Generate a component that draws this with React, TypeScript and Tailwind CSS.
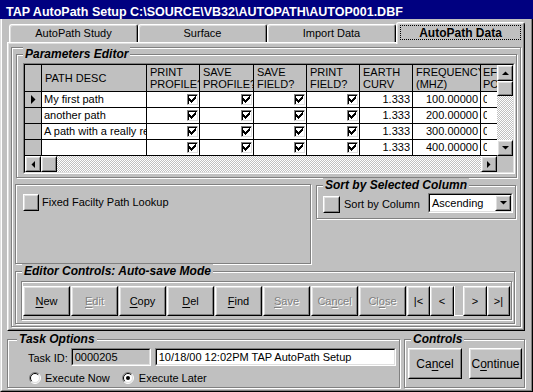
import React from "react";

type P = { className?: string; inner?: string; children?: React.ReactNode };

const RAISED_OUT = "border border-t-white border-l-white border-r-black border-b-black";
const RAISED_IN = "border border-t-[#dfdfdf] border-l-[#dfdfdf] border-r-[#808080] border-b-[#808080]";
const SUNK_OUT = "border border-t-[#808080] border-l-[#808080] border-r-white border-b-white";
const SUNK_IN = "border border-t-black border-l-black border-r-[#dfdfdf] border-b-[#dfdfdf]";
const ETCHED = "border border-[#808080] shadow-[inset_1px_1px_0_#ffffff,1px_1px_0_#ffffff]";
const DITHER =
  "bg-[repeating-conic-gradient(#ffffff_0%_25%,#c0c0c0_0%_50%)] [background-size:2px_2px]";

function Raised({ className = "", inner = "", children }: P) {
  return (
    <div className={`${RAISED_OUT} bg-[#c0c0c0] shrink-0 ${className}`}>
      <div className={`${RAISED_IN} w-full h-full flex items-center justify-center ${inner}`}>{children}</div>
    </div>
  );
}

function Sunken({ className = "", inner = "", children }: P) {
  return (
    <div className={`${SUNK_OUT} shrink-0 ${className}`}>
      <div className={`${SUNK_IN} w-full h-full ${inner}`}>{children}</div>
    </div>
  );
}

function Group({ label, className = "", labelPos = "left-[6px]", children }: P & { label?: string; labelPos?: string }) {
  return (
    <div className={`relative shrink-0 ${ETCHED} ${className}`}>
      {label && (
        <span
          className={`absolute ${labelPos} top-[-8px] bg-[#c0c0c0] px-[2px] text-[12px] leading-[14px] font-bold italic whitespace-nowrap`}
        >
          {label}
        </span>
      )}
      {children}
    </div>
  );
}

function Arrow({ dir }: { dir: "up" | "down" | "left" | "right" }) {
  const pts =
    dir === "up"
      ? "0,4 7,4 3.5,0.5"
      : dir === "down"
      ? "0,0 7,0 3.5,3.5"
      : dir === "left"
      ? "4,0 4,7 0.5,3.5"
      : "0,0 0,7 3.5,3.5";
  const w = dir === "up" || dir === "down" ? 7 : 4;
  const h = dir === "up" || dir === "down" ? 4 : 7;
  return (
    <svg width={w} height={h} viewBox={`0 0 ${w} ${h}`}>
      <polygon points={pts} fill="#000" />
    </svg>
  );
}

function Check() {
  return (
    <div className="w-[11px] h-[11px] border border-t-[#808080] border-l-[#808080] border-r-[#dfdfdf] border-b-[#dfdfdf] bg-white flex items-center justify-center shadow-[inset_1px_1px_0_#000]">
      <svg width="7" height="7" viewBox="0 0 7 7" shapeRendering="crispEdges">
        <path
          d="M6 0h1v1h-1zM5 1h2v1h-2zM0 2h1v1h-1zM4 2h3v1h-3zM0 3h2v1h-2zM3 3h3v1h-3zM0 4h5v1h-5zM1 5h3v1h-3zM2 6h1v1h-1z"
          fill="#000"
        />
      </svg>
    </div>
  );
}

function Radio({ checked }: { checked?: boolean }) {
  return (
    <svg width="12" height="12" viewBox="0 0 12 12" className="shrink-0">
      <circle cx="6" cy="6" r="5" fill="#fff" />
      <path d="M2.1 9.9 A5.5 5.5 0 0 1 9.9 2.1" stroke="#808080" fill="none" />
      <path d="M9.9 2.1 A5.5 5.5 0 0 1 2.1 9.9" stroke="#ffffff" fill="none" />
      <path d="M2.8 9.2 A4.5 4.5 0 0 1 9.2 2.8" stroke="#000" fill="none" />
      <path d="M9.2 2.8 A4.5 4.5 0 0 1 2.8 9.2" stroke="#dfdfdf" fill="none" />
      {checked && <circle cx="6" cy="6" r="2" fill="#000" />}
    </svg>
  );
}

const cols = [
  { w: "w-[105px]", h: ["PATH DESC"] },
  { w: "w-[53px]", h: ["PRINT", "PROFILE?"] },
  { w: "w-[54px]", h: ["SAVE", "PROFILE?"] },
  { w: "w-[53px]", h: ["SAVE", "FIELD?"] },
  { w: "w-[53px]", h: ["PRINT", "FIELD?"] },
  { w: "w-[53px]", h: ["EARTH", "CURV"] },
  { w: "w-[68px]", h: ["FREQUENCY", "(MHZ)"] },
];

const rows = [
  { name: "My first path", fr: "100.00000", cur: true },
  { name: "another path", fr: "200.00000" },
  { name: "A path with a really really long description", fr: "300.00000" },
  { name: "", fr: "400.00000" },
];

function Grid() {
  return (
    <Sunken className="w-[492px] h-[111px]" inner="flex bg-[#c0c0c0]">
      <div className="w-[472px] flex flex-col">
        <div className="h-[27px] flex bg-[#c0c0c0] border-b border-b-black">
          <div className="w-[17px] shrink-0 border-r border-r-black" />
          {cols.map((c, i) => (
            <div
              key={i}
              className={`${c.w} shrink-0 border-r border-r-black overflow-hidden whitespace-nowrap pl-[3px] flex flex-col ${
                c.h.length === 1 ? "justify-center" : "pt-[1px]"
              } leading-[12px]`}
            >
              {c.h.map((t, j) => (
                <span key={j}>{t}</span>
              ))}
            </div>
          ))}
          <div className="w-[16px] shrink-0 overflow-hidden whitespace-nowrap pl-[2px] pt-[1px] leading-[12px] flex flex-col">
            <span>EF</span>
            <span>PO</span>
          </div>
        </div>
        {rows.map((r, i) => (
          <div key={i} className="h-[16px] flex border-b border-b-black bg-white leading-[15px]">
            <div className="w-[17px] shrink-0 border-r border-r-black bg-[#c0c0c0] flex items-center justify-center">
              {r.cur && (
                <svg width="5" height="9" viewBox="0 0 5 9">
                  <polygon points="0,0 4.5,4.5 0,9" fill="#000" />
                </svg>
              )}
            </div>
            <div className="w-[105px] shrink-0 border-r border-r-black overflow-hidden whitespace-nowrap pl-[2px]">
              {r.name}
            </div>
            {["w-[53px]", "w-[54px]", "w-[53px]", "w-[53px]"].map((w, j) => (
              <div key={j} className={`${w} shrink-0 border-r border-r-black flex items-center justify-end pr-[1px]`}>
                <Check />
              </div>
            ))}
            <div className="w-[53px] shrink-0 border-r border-r-black text-right pr-[2px]">1.333</div>
            <div className="w-[68px] shrink-0 border-r border-r-black text-right pr-[2px]">{r.fr}</div>
            <div className="w-[16px] shrink-0 pl-[2px] overflow-hidden">
              <div className="w-[4px] overflow-hidden">0</div>
            </div>
          </div>
        ))}
        <div className="h-[16px] flex">
          <Raised className="w-[16px] h-[16px]">
            <Arrow dir="left" />
          </Raised>
          <Raised className="w-[16px] h-[16px]" />
          <div className={`flex-1 ${DITHER}`} />
          <Raised className="w-[16px] h-[16px]">
            <Arrow dir="right" />
          </Raised>
        </div>
      </div>
      <div className="w-[16px] flex flex-col">
        <Raised className="w-[16px] h-[16px]">
          <Arrow dir="up" />
        </Raised>
        <Raised className="w-[16px] h-[15px]" />
        <div className={`flex-1 ${DITHER}`} />
        <Raised className="w-[16px] h-[16px]">
          <Arrow dir="down" />
        </Raised>
        <div className="h-[16px] bg-[#c0c0c0]" />
      </div>
    </Sunken>
  );
}

function Btn({
  children,
  disabled,
  className = "w-[47px] h-[30px]",
}: {
  children: React.ReactNode;
  disabled?: boolean;
  className?: string;
}) {
  return (
    <Raised
      className={className}
      inner={disabled ? "text-[#808080] [text-shadow:1px_1px_0_#ffffff]" : ""}
    >
      <span className="whitespace-nowrap">{children}</span>
    </Raised>
  );
}

const U = ({ c }: { c: string }) => <span className="underline underline-offset-[2px]">{c}</span>;

export default function App() {
  const tabs = ["AutoPath Study", "Surface", "Import Data", "AutoPath Data"];
  return (
    <div className="w-[533px] h-[392px] bg-[#c0c0c0] font-['Liberation_Sans',Arial,sans-serif] text-[11px] text-black overflow-hidden flex flex-col">
      <div className="h-[19px] shrink-0 bg-[#000080] text-white font-bold text-[12.5px] leading-[14px] pt-[5px] pl-[6px] whitespace-nowrap overflow-hidden">
        {"TAP AutoPath Setup C:\\SOURCE\\VB32\\AUTOPATH\\AUTOP001.DBF"}
      </div>
      <div className="flex-1 flex flex-col border-l border-r border-b border-l-[#dfdfdf] border-r-black border-b-black">
        <div className="flex-1 flex flex-col border-l border-r border-b border-l-white border-r-[#808080] border-b-[#808080] pl-[5px] pr-[6px] pt-[3px]">
          <div className="h-[309px] flex flex-col shrink-0">
            <div className="h-[20px] flex items-end pl-[2px] shrink-0">
              {tabs.map((t, i) =>
                i === 3 ? (
                  <div
                    key={t}
                    className="relative z-10 w-[129px] h-[22px] -mb-[2px] bg-[#c0c0c0] border-t border-l border-r border-t-white border-l-white border-r-black rounded-t-[3px] shadow-[inset_1px_1px_0_#dfdfdf,inset_-1px_0_0_#808080] pt-[2px] px-[3px] pb-[3px]"
                  >
                    <div className="h-[15px] border border-dotted border-black flex items-center justify-center font-bold text-[12px]">
                      {t}
                    </div>
                  </div>
                ) : (
                  <div
                    key={t}
                    className="w-[129px] h-[18px] bg-[#c0c0c0] border-t border-l border-r border-t-white border-l-white border-r-black rounded-t-[3px] shadow-[inset_1px_1px_0_#dfdfdf,inset_-1px_0_0_#808080] flex items-center justify-center"
                  >
                    {t}
                  </div>
                )
              )}
            </div>
            <div className={`flex-1 ${RAISED_OUT}`}>
              <div className={`w-full h-full ${RAISED_IN} p-[2px] pt-[3px]`}>
                <div className={`w-full h-full ${ETCHED} flex flex-col`}>
                  <Group label="Parameters Editor" className="ml-[4px] mr-[3px] mt-[6px] h-[124px] pl-[6px] pt-[8px]">
                    <Grid />
                  </Group>
                  <div className="flex mt-[6px] items-start">
                    <div className={`${ETCHED} ml-[3px] w-[296px] h-[80px] shrink-0 flex items-start pl-[7px] pt-[9px]`}>
                      <Raised className="w-[16px] h-[17px]" />
                      <span className="ml-[3px] whitespace-nowrap">Fixed Facilty Path Lookup</span>
                    </div>
                    <Group
                      label="Sort by Selected Column"
                      className="ml-[5px] mt-[1px] w-[200px] h-[34px] flex items-center pl-[6px] pt-[2px]"
                    >
                      <Raised className="w-[17px] h-[17px] mt-[3px]" />
                      <span className="ml-[4px] mt-[2px] whitespace-nowrap">Sort by Column</span>
                      <Sunken className="ml-auto mr-[2px] w-[85px] h-[20px]" inner="bg-white flex items-center">
                        <span className="pl-[2px] flex-1">Ascending</span>
                        <Raised className="w-[16px] h-[16px]">
                          <Arrow dir="down" />
                        </Raised>
                      </Sunken>
                    </Group>
                  </div>
                  <Group label="Editor Controls: Auto-save Mode" className="ml-[3px] mt-[7px] w-[500px] h-[53px] pl-[5px] pt-[9px]">
                    <div className={`${ETCHED} w-[491px] h-[39px] flex items-start pl-[1px] pt-[4px]`}>
                      <div className="flex gap-[1px]">
                        <Btn>
                          <U c="N" />
                          ew
                        </Btn>
                        <Btn disabled>
                          <U c="E" />
                          dit
                        </Btn>
                        <Btn>
                          <U c="C" />
                          opy
                        </Btn>
                        <Btn>
                          <U c="D" />
                          el
                        </Btn>
                        <Btn>
                          <U c="F" />
                          ind
                        </Btn>
                        <Btn disabled>
                          <U c="S" />
                          ave
                        </Btn>
                        <Btn disabled>
                          Ca
                          <U c="n" />
                          cel
                        </Btn>
                        <Btn disabled>
                          Cl
                          <U c="o" />
                          se
                        </Btn>
                      </div>
                      <div className="flex ml-[1px]">
                        <Btn className="w-[23px] h-[30px]">|&lt;</Btn>
                        <Btn className="w-[24px] h-[30px]">&lt;</Btn>
                        <div className="w-[9px] h-[30px] border-l border-b border-l-white border-b-white" />
                        <Btn className="w-[24px] h-[30px]">&gt;</Btn>
                        <Btn className="w-[23px] h-[30px]">&gt;|</Btn>
                      </div>
                    </div>
                  </Group>
                </div>
              </div>
            </div>
          </div>
          <div className="flex mt-[8px]">
            <Group label="Task Options" labelPos="left-[9px]" className="w-[393px] h-[49px] flex flex-col pl-[20px] pt-[7px]">
              <div className="flex items-center">
                <span className="mt-[3px] whitespace-nowrap">Task ID:</span>
                <Sunken className="ml-[3px] w-[80px] h-[18px]" inner="bg-[#c0c0c0] pl-[2px] leading-[14px]">
                  0000205
                </Sunken>
                <Sunken className="ml-[4px] w-[241px] h-[18px]" inner="bg-white pl-[2px] leading-[14px] whitespace-nowrap">
                  10/18/00 12:02PM TAP AutoPath Setup
                </Sunken>
              </div>
              <div className="flex items-center mt-[3px] pl-[1px]">
                <Radio />
                <span className="ml-[4px] whitespace-nowrap">Execute Now</span>
                <span className="ml-[12px]">
                  <Radio checked />
                </span>
                <span className="ml-[5px] whitespace-nowrap">Execute Later</span>
              </div>
            </Group>
            <Group label="Controls" className="ml-[4px] w-[121px] h-[49px] flex items-start pl-[3px] pt-[8px]">
              <Btn className="w-[54px] h-[31px]">
                <span className="text-[12px]">
                  Ca
                  <U c="n" />
                  cel
                </span>
              </Btn>
              <Btn className="ml-[7px] w-[53px] h-[31px]">
                <span className="text-[12px]">
                  C<U c="o" />
                  ntinue
                </span>
              </Btn>
            </Group>
          </div>
        </div>
      </div>
    </div>
  );
}
